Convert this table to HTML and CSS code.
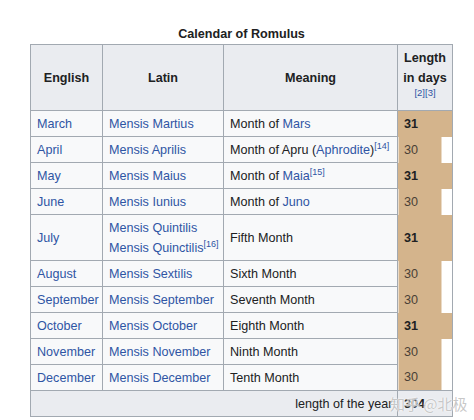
FILE: index.html
```html
<!DOCTYPE html>
<html lang="en">
<head>
<meta charset="utf-8">
<title>Calendar of Romulus</title>
<link rel="stylesheet" href="styles.css">
</head>
<body>
<div class="page">
  <table class="wikitable">
    <caption>Calendar of Romulus</caption>
    <colgroup>
      <col class="c-en"><col class="c-la"><col class="c-me"><col class="c-len">
    </colgroup>
    <thead>
      <tr>
        <th>English</th>
        <th>Latin</th>
        <th>Meaning</th>
        <th class="len-h">Length<br>in days<br><sup class="ref"><a href="#">[2]</a><a href="#">[3]</a></sup></th>
      </tr>
    </thead>
    <tbody>
      <tr><td><a href="#">March</a></td><td><a href="#">Mensis Martius</a></td><td>Month of <a href="#">Mars</a></td><td class="bar d31"><b>31</b></td></tr>
      <tr><td><a href="#">April</a></td><td><a href="#">Mensis Aprilis</a></td><td>Month of Apru (<a href="#">Aphrodite</a>)<sup class="ref"><a href="#">[14]</a></sup></td><td class="bar d30">30</td></tr>
      <tr><td><a href="#">May</a></td><td><a href="#">Mensis Maius</a></td><td>Month of <a href="#">Maia</a><sup class="ref"><a href="#">[15]</a></sup></td><td class="bar d31"><b>31</b></td></tr>
      <tr><td><a href="#">June</a></td><td><a href="#">Mensis Iunius</a></td><td>Month of <a href="#">Juno</a></td><td class="bar d30">30</td></tr>
      <tr><td><a href="#">July</a></td><td><a href="#">Mensis Quintilis</a><br><a href="#">Mensis Quinctilis</a><sup class="ref"><a href="#">[16]</a></sup></td><td>Fifth Month</td><td class="bar d31"><b>31</b></td></tr>
      <tr><td><a href="#">August</a></td><td><a href="#">Mensis Sextilis</a></td><td>Sixth Month</td><td class="bar d30">30</td></tr>
      <tr><td><a href="#">September</a></td><td><a href="#">Mensis September</a></td><td>Seventh Month</td><td class="bar d30">30</td></tr>
      <tr><td><a href="#">October</a></td><td><a href="#">Mensis October</a></td><td>Eighth Month</td><td class="bar d31"><b>31</b></td></tr>
      <tr><td><a href="#">November</a></td><td><a href="#">Mensis November</a></td><td>Ninth Month</td><td class="bar d30">30</td></tr>
      <tr><td><a href="#">December</a></td><td><a href="#">Mensis December</a></td><td>Tenth Month</td><td class="bar d30">30</td></tr>
    </tbody>
    <tfoot>
      <tr><td colspan="3" class="total-label">length of the year:</td><td class="total"><b>304</b></td></tr>
    </tfoot>
  </table>
  <span class="watermark">知乎 @北极</span>
</div>
</body>
</html>
```

FILE: styles.css
```css
html, body {
  margin: 0;
  padding: 0;
  background: #ffffff;
}

body {
  font-family: "Liberation Sans", Arial, sans-serif;
  font-size: 12.6px;
  color: #202122;
}

.page {
  position: relative;
  padding: 24px 0 0 30px;
}

.wikitable {
  border-collapse: collapse;
  table-layout: fixed;
  width: 422px;
  background: #f8f9fa;
  border: 1px solid #a2a9b1;
}

.wikitable caption {
  font-weight: bold;
  line-height: 20px;
  text-align: center;
}

.c-en { width: 72px; }
.c-la { width: 121px; }
.c-me { width: 174px; }
.c-len { width: 55px; }

.wikitable th,
.wikitable td {
  border: 1px solid #a2a9b1;
  line-height: 20px;
  padding: 2.5px 6px;
  vertical-align: middle;
  white-space: nowrap;
}

.wikitable th {
  background: #eaecf0;
  font-weight: bold;
  text-align: center;
  height: 58px;
}

.wikitable th.len-h {
  padding: 2.5px 2px;
  line-height: 20px;
}

.wikitable td {
  text-align: left;
}

a {
  color: #2f55a4;
  text-decoration: none;
}

sup.ref {
  font-size: 9px;
  line-height: 1;
  vertical-align: super;
  font-weight: normal;
}

th sup.ref {
  vertical-align: top;
  font-size: 9.5px;
}

.wikitable td.bar {
  border-top: none;
  border-bottom: none;
  color: #4a4036;
}

.wikitable td.bar b {
  color: #202122;
}

.d31 {
  background: #d4b48c;
}

.d30 {
  background: linear-gradient(to right, #d4b48c 0, #d4b48c 43px, #ffffff 43px);
}

.wikitable tfoot td {
  background: #eaecf0;
}

.wikitable td.total-label {
  text-align: right;
  padding-right: 1px;
}

.watermark {
  position: absolute;
  left: 390px;
  top: 394px;
  font-family: "Noto Sans CJK SC", sans-serif;
  font-size: 15px;
  line-height: 20px;
  color: rgba(175, 175, 175, 0.7);
  text-shadow: 0 0 1px #ffffff, 0 0 2px #ffffff;
  white-space: nowrap;
}
```
